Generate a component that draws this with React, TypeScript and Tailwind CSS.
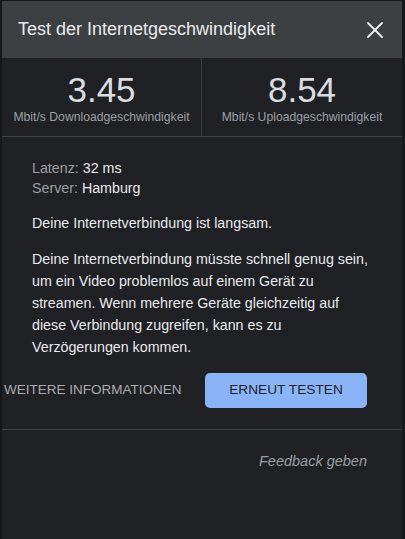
import { X } from "lucide-react";

const font = { fontFamily: '"Liberation Sans", Arial, sans-serif' };

const stats = [
  { value: "3.45", label: "Mbit/s Downloadgeschwindigkeit" },
  { value: "8.54", label: "Mbit/s Uploadgeschwindigkeit" },
];

export default function App() {
  return (
    <div className="flex h-[539px] w-[405px] bg-[#16171a] pl-[2px] pr-[3px] pt-[1px]" style={font}>
      <div className="flex flex-1 flex-col bg-[#202124]">
        <div className="flex h-[57px] items-center justify-between bg-[#3c4043] pl-4 pr-[13px]">
          <h1 className="text-[18px] text-[#e8eaed]">Test der Internetgeschwindigkeit</h1>
          <X className="h-[28px] w-[28px] text-[#e8eaed]" strokeWidth={1.6} />
        </div>

        <div className="grid h-[79px] grid-cols-2 border-b border-[#3c4043]">
          {stats.map((s, i) => (
            <div
              key={s.label}
              className={`flex flex-col items-center pt-[12px] ${i === 0 ? "border-r border-[#3c4043]" : ""}`}
            >
              <span className="text-[35px] leading-[40px] text-[#dadce0]">{s.value}</span>
              <span className="text-[12.2px] leading-[14px] text-[#9aa0a6]">{s.label}</span>
            </div>
          ))}
        </div>

        <div className="pl-[30px] pr-[30px] pt-[21px] text-[14.25px] text-[#e8eaed]">
          <div className="leading-[20px]">
            <p>
              <span className="text-[#9aa0a6]">Latenz:</span> 32 ms
            </p>
            <p>
              <span className="text-[#9aa0a6]">Server:</span> Hamburg
            </p>
          </div>
          <p className="mt-[14px] leading-[22px]">Deine Internetverbindung ist langsam.</p>
          <p className="mt-[14px] whitespace-nowrap leading-[22px]">
            Deine Internetverbindung müsste schnell genug sein,
            <br />
            um ein Video problemlos auf einem Gerät zu
            <br />
            streamen. Wenn mehrere Geräte gleichzeitig auf
            <br />
            diese Verbindung zugreifen, kann es zu
            <br />
            Verzögerungen kommen.
          </p>
        </div>

        <div className="mt-[15px] flex items-center pl-[2px] pr-[35px]">
          <span className="text-[13.5px] text-[#a8acb1]">WEITERE INFORMATIONEN</span>
          <button className="ml-auto h-[35px] w-[162px] rounded-[5px] bg-[#8ab4f8] text-[13.7px] text-[#202124]">
            ERNEUT TESTEN
          </button>
        </div>

        <div className="mt-[21px] border-t border-[#3c4043]" />

        <div className="pr-[35px] pt-[21px] text-right text-[14.5px] italic text-[#9aa0a6]">
          Feedback geben
        </div>
      </div>
    </div>
  );
}
